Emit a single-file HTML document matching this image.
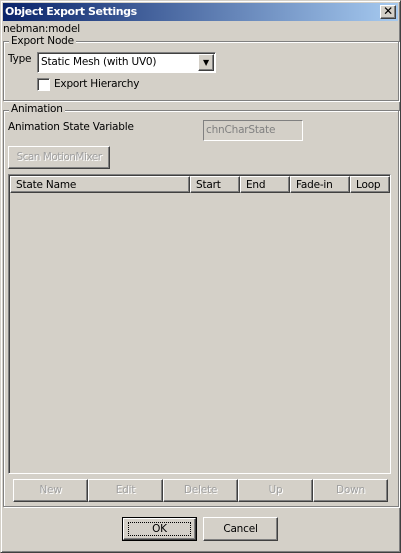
<!DOCTYPE html>
<html><head><style>
*{margin:0;padding:0;box-sizing:border-box}
body{width:401px;height:553px;background:#d4d0c8;font-family:"DejaVu Sans",sans-serif;font-size:10.5px;letter-spacing:-0.2px;color:#000;position:relative;overflow:hidden}
.a{position:absolute}
.win{left:0;top:0;width:401px;height:553px;border:1px solid;border-color:#d4d0c8 #404040 #404040 #d4d0c8;box-shadow:inset 1px 1px 0 #fff,inset -1px -1px 0 #808080}
.title{left:3px;top:3px;width:395px;height:18px;background:linear-gradient(90deg,#0a246a,#a6caf0);color:#fff;font-weight:bold;font-size:11px;letter-spacing:-0.4px;padding:2px 0 0 2px}
.btn{border:1px solid;border-color:#fff #404040 #404040 #fff;box-shadow:inset -1px -1px 0 #808080;text-align:center;background:#d4d0c8}
.dis{color:#a0a0a0;text-shadow:1px 1px 0 #fff}
.grp{border:1px solid #808080;box-shadow:1px 1px 0 #fff,inset 1px 1px 0 #fff}
.lbl{background:#d4d0c8;padding:0 2px}
.sunk{border:1px solid;border-color:#808080 #fff #fff #808080;box-shadow:inset 1px 1px 0 #404040}
.hd{top:176px;height:17px;padding:2px 0 0 5px;text-align:left}
</style></head><body>
<div class="a win"></div>
<div class="a title">Object Export Settings</div>
<div class="a btn" style="left:380px;top:5px;width:16px;height:14px;font-size:12px;line-height:11px;font-weight:bold">✕</div>
<div class="a" style="left:3px;top:23px">nebman:model</div>
<div class="a grp" style="left:3px;top:41px;width:396px;height:60px"></div>
<div class="a lbl" style="left:9px;top:35px">Export Node</div>
<div class="a" style="left:8px;top:53px">Type</div>
<div class="a sunk" style="left:37px;top:52px;width:179px;height:21px;background:#fff;padding:3px 0 0 3px">Static Mesh (with UV0)</div>
<div class="a btn" style="left:198px;top:54px;width:16px;height:17px;font-size:8px;line-height:15px">▼</div>
<div class="a sunk" style="left:37px;top:78px;width:13px;height:13px;background:#fff"></div>
<div class="a" style="left:54px;top:78px">Export Hierarchy</div>
<div class="a grp" style="left:3px;top:110px;width:396px;height:397px"></div>
<div class="a lbl" style="left:9px;top:103px">Animation</div>
<div class="a" style="left:8px;top:121px">Animation State Variable</div>
<div class="a sunk" style="left:203px;top:120px;width:100px;height:21px;color:#808080;padding:3px 0 0 2px;box-shadow:none">chnCharState</div>
<div class="a btn dis" style="left:8px;top:146px;width:102px;height:23px;padding-top:4px;letter-spacing:-0.5px">Scan MotionMixer</div>
<div class="a sunk" style="left:8px;top:174px;width:383px;height:300px"></div>
<div class="a btn hd" style="left:10px;width:180px">State Name</div>
<div class="a btn hd" style="left:190px;width:50px">Start</div>
<div class="a btn hd" style="left:240px;width:50px">End</div>
<div class="a btn hd" style="left:290px;width:60px">Fade-in</div>
<div class="a btn hd" style="left:350px;width:40px">Loop</div>
<div class="a btn dis" style="left:13px;top:479px;width:75px;height:23px;padding-top:4px">New</div>
<div class="a btn dis" style="left:88px;top:479px;width:75px;height:23px;padding-top:4px">Edit</div>
<div class="a btn dis" style="left:163px;top:479px;width:75px;height:23px;padding-top:4px">Delete</div>
<div class="a btn dis" style="left:238px;top:479px;width:75px;height:23px;padding-top:4px">Up</div>
<div class="a btn dis" style="left:313px;top:479px;width:75px;height:23px;padding-top:4px">Down</div>
<div class="a" style="left:122px;top:517px;width:75px;height:24px;border:1px solid #000"></div>
<div class="a btn" style="left:123px;top:518px;width:73px;height:22px;padding-top:3px"><span style="display:inline-block;width:63px;border:1px dotted #000">OK</span></div>
<div class="a btn" style="left:203px;top:517px;width:75px;height:24px;padding-top:5px">Cancel</div>
</body></html>
